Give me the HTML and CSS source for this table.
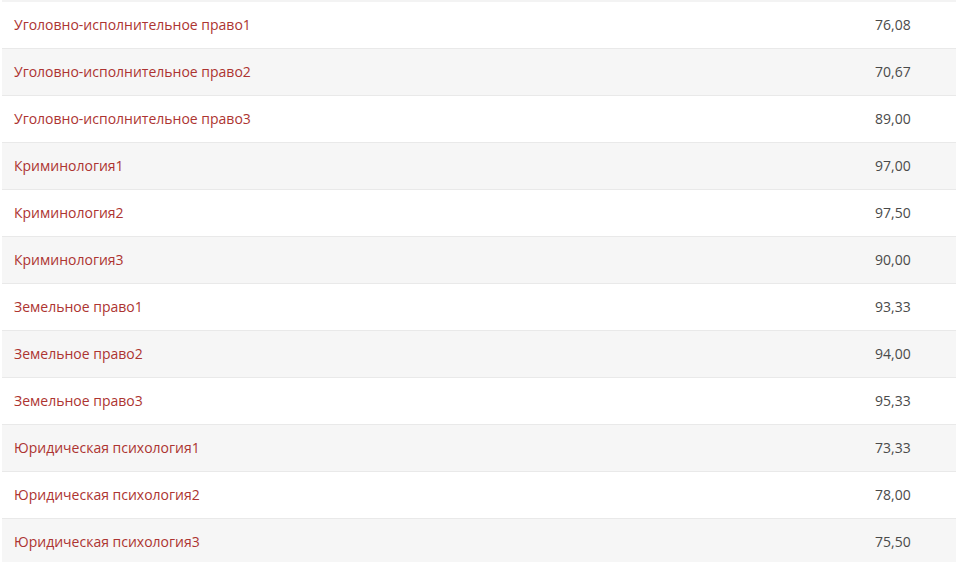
FILE: index.html
```html
<!DOCTYPE html>
<html lang="ru">
<head>
<meta charset="utf-8">
<link rel="stylesheet" href="styles.css">
</head>
<body>
<table class="grades">
  <tbody>
    <tr><td class="name">Уголовно-исполнительное право1</td><td class="val">76,08</td></tr>
    <tr><td class="name">Уголовно-исполнительное право2</td><td class="val">70,67</td></tr>
    <tr><td class="name">Уголовно-исполнительное право3</td><td class="val">89,00</td></tr>
    <tr><td class="name">Криминология1</td><td class="val">97,00</td></tr>
    <tr><td class="name">Криминология2</td><td class="val">97,50</td></tr>
    <tr><td class="name">Криминология3</td><td class="val">90,00</td></tr>
    <tr><td class="name">Земельное право1</td><td class="val">93,33</td></tr>
    <tr><td class="name">Земельное право2</td><td class="val">94,00</td></tr>
    <tr><td class="name">Земельное право3</td><td class="val">95,33</td></tr>
    <tr><td class="name">Юридическая психология1</td><td class="val">73,33</td></tr>
    <tr><td class="name">Юридическая психология2</td><td class="val">78,00</td></tr>
    <tr><td class="name">Юридическая психология3</td><td class="val">75,50</td></tr>
  </tbody>
</table>
</body>
</html>
```
FILE: styles.css
```css
html, body {
  margin: 0;
  padding: 0;
  background: #fff;
}
body {
  font-family: "Open Sans", "Segoe UI", sans-serif;
  font-size: 14px;
}
.grades {
  width: 954px;
  margin: 0 2px;
  border-collapse: collapse;
  table-layout: fixed;
  border-top: 2px solid #f3f3f3;
}
.grades tr {
  border-top: 1px solid #e9e9e9;
}
.grades tr:first-child {
  border-top: none;
}
.grades tr:nth-child(even) {
  background: #f6f6f6;
}
.grades td {
  height: 47px;
  padding: 0 12px;
  vertical-align: middle;
  box-sizing: border-box;
}
.name {
  color: #ad3431;
}
.val {
  width: 93px;
  color: #4a4a4a;
}
```
